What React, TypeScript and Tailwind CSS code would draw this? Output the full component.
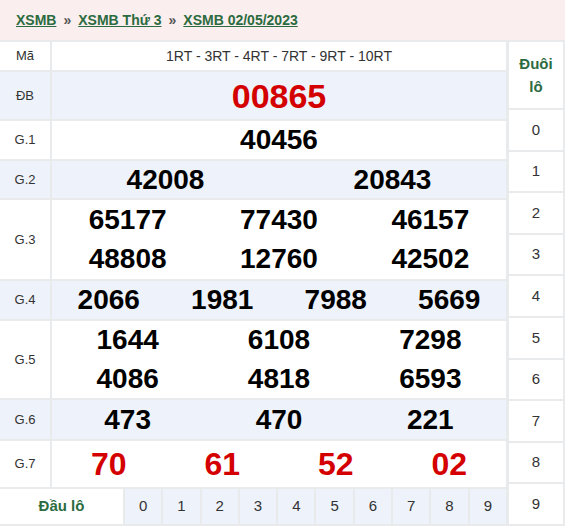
const font = { fontFamily: '"Liberation Sans", Arial, sans-serif' };

type Row = { label: string; h: string; bg: string; lines: string[][]; red?: boolean; big?: boolean };

const rows: Row[] = [
  { label: "ĐB", h: "h-[47px]", bg: "bg-[#eef2fa]", lines: [["00865"]], red: true, big: true },
  { label: "G.1", h: "h-[38px]", bg: "bg-white", lines: [["40456"]] },
  { label: "G.2", h: "h-[37px]", bg: "bg-[#eef2fa]", lines: [["42008", "20843"]] },
  { label: "G.3", h: "h-[79px]", bg: "bg-white", lines: [["65177", "77430", "46157"], ["48808", "12760", "42502"]] },
  { label: "G.4", h: "h-[38px]", bg: "bg-[#eef2fa]", lines: [["2066", "1981", "7988", "5669"]] },
  { label: "G.5", h: "h-[77px]", bg: "bg-white", lines: [["1644", "6108", "7298"], ["4086", "4818", "6593"]] },
  { label: "G.6", h: "h-[39px]", bg: "bg-[#eef2fa]", lines: [["473", "470", "221"]] },
  { label: "G.7", h: "h-[46px]", bg: "bg-white", lines: [["70", "61", "52", "02"]], red: true },
];

const cols: Record<number, string> = {
  1: "grid-cols-1",
  2: "grid-cols-2",
  3: "grid-cols-3",
  4: "grid-cols-4",
};

const digits = ["0", "1", "2", "3", "4", "5", "6", "7", "8", "9"];

export default function App() {
  return (
    <div className="w-[565px] h-[527px] bg-white overflow-hidden" style={font}>
      <div className="h-[40px] bg-[#fbeeee] flex items-center pl-4 text-[14px] font-bold text-[#2b6b3f]">
        <a className="underline">XSMB</a>
        <span className="text-[#555] mx-[7px]">»</span>
        <a className="underline">XSMB Thứ 3</a>
        <span className="text-[#555] mx-[7px]">»</span>
        <a className="underline">XSMB 02/05/2023</a>
      </div>

      <div className="flex gap-[3px] bg-[#e9eaec] py-[2px] pr-[2px] w-[565px]">
        <div className="w-[506px] flex flex-col gap-[2px]">
          <div className="flex gap-[2px] h-[28px]">
            <div className="w-[50px] bg-white flex items-center justify-center text-[13px] text-[#333]">Mã</div>
            <div className="flex-1 bg-white flex items-center justify-center text-[14px] text-[#333]">
              1RT - 3RT - 4RT - 7RT - 9RT - 10RT
            </div>
          </div>

          {rows.map((r) => (
            <div key={r.label} className={`flex gap-[2px] ${r.h}`}>
              <div className={`w-[50px] ${r.bg} flex items-center justify-center text-[13px] text-[#333]`}>
                {r.label}
              </div>
              <div className={`flex-1 ${r.bg} flex flex-col`}>
                {r.lines.map((line, i) => (
                  <div key={i} className={`flex-1 grid ${cols[line.length]} items-center`}>
                    {line.map((n) => (
                      <span
                        key={n}
                        className={`text-center font-bold leading-none ${
                          r.big ? "text-[34px]" : r.red ? "text-[32px]" : "text-[28px]"
                        } ${r.red ? "text-[#d40000]" : "text-black"}`}
                      >
                        {n}
                      </span>
                    ))}
                  </div>
                ))}
              </div>
            </div>
          ))}

          <div className="grid grid-cols-[123px_repeat(10,1fr)] gap-[2px] h-[35px]">
            <div className="bg-white flex items-center justify-center text-[15px] font-bold text-[#2b6b3f]">
              Đầu lô
            </div>
            {digits.map((d) => (
              <div key={d} className="bg-[#eef2fa] flex items-center justify-center text-[15px] text-[#333]">
                {d}
              </div>
            ))}
          </div>
        </div>

        <div className="flex-1 flex flex-col gap-[2px]">
          <div className="h-[66px] bg-white flex items-center justify-center text-center text-[15px] font-bold leading-[23px] text-[#2b6b3f]">
            Đuôi
            <br />
            lô
          </div>
          {digits.map((d) => (
            <div key={d} className="flex-1 bg-white flex items-center justify-center text-[15px] text-[#333]">
              {d}
            </div>
          ))}
        </div>
      </div>
    </div>
  );
}
